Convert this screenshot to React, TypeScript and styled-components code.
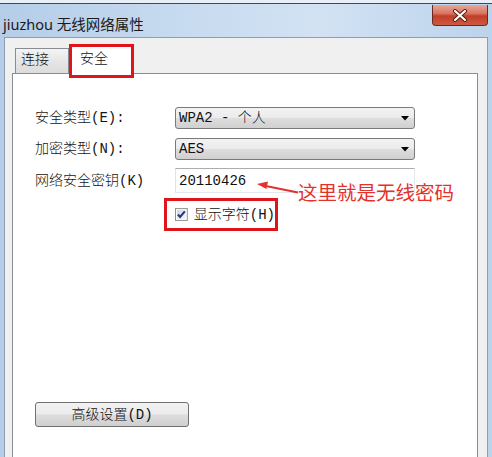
import React from 'react';
import styled, { createGlobalStyle } from 'styled-components';

const Global = createGlobalStyle`
  html, body { margin: 0; padding: 0; background: #e9eff6; }
  #root { width: 492px; height: 457px; }
`;

const UI = `"Noto Sans", "Noto Sans CJK SC", sans-serif`;
const SONG = `"Liberation Mono", "Noto Sans CJK SC", monospace`;

const Page = styled.div`
  width: 492px;
  height: 457px;
  overflow: hidden;
  box-sizing: border-box;
  padding-top: 3px;
  background: #e9eff6;
`;

const Window = styled.div`
  height: 454px;
  display: flex;
  flex-direction: column;
  border-top: 1px solid #3d4957;
  background: linear-gradient(90deg, #b5cde8 0%, #c6daef 35%, #d2e2f3 65%, #bcd3ec 100%);
`;

const TitleBar = styled.div`
  height: 33px;
  flex: none;
  display: flex;
  justify-content: space-between;
  align-items: flex-start;
  padding-left: 3px;
`;

const Title = styled.div`
  margin-top: 10px;
  font: 14.5px/20px ${UI};
  color: #1a1a1a;
`;

const CloseButton = styled.div`
  width: 56px;
  height: 21px;
  box-sizing: border-box;
  margin-top: 1px;
  margin-right: 4px;
  border: 1px solid #6b2a20;
  border-top: none;
  border-radius: 0 0 4px 4px;
  background: linear-gradient(180deg, #e8a898 0%, #d97561 42%, #c23e28 55%, #cc5a42 100%);
  display: flex;
  align-items: center;
  justify-content: center;
`;

const Client = styled.div`
  flex: 1;
  margin: 0 4px;
  border: 1px solid #8e9db0;
  border-bottom: none;
  background: #f0f0f0;
  padding: 6px 9px 0 7px;
  display: flex;
  flex-direction: column;
  min-height: 0;
`;

const TabStrip = styled.div`
  height: 29px;
  flex: none;
  display: flex;
  align-items: flex-end;
  padding-left: 3px;
  position: relative;
  z-index: 1;
`;

const Tab = styled.div<{ $active?: boolean }>`
  box-sizing: border-box;
  font-size: 14px;
  font-family: ${SONG};
  font-weight: 300;
  color: #111;
  ${(p) =>
    p.$active
      ? `
    width: 65px;
    height: 34px;
    margin-bottom: -5px;
    border: 3px solid #e0141b;
    background: #fff;
    padding: 5px 0 0 8px;
    line-height: 14px;
  `
      : `
    width: 54px;
    height: 25px;
    border: 1px solid #898c95;
    border-bottom: none;
    background: linear-gradient(180deg, #f4f4f4 0%, #e6e6e6 50%, #dcdcdc 100%);
    padding-left: 5px;
    line-height: 23px;
  `}
`;

const Panel = styled.div`
  flex: 1;
  position: relative;
  background: #fff;
  border: 1px solid #898c95;
  border-bottom: none;
  padding: 33px 0 0 22px;
  display: flex;
  flex-direction: column;
  align-items: flex-start;
`;

const Row = styled.div<{ $h: number; $mb: number }>`
  display: grid;
  grid-template-columns: 140px 240px;
  align-items: center;
  height: ${(p) => p.$h}px;
  margin-bottom: ${(p) => p.$mb}px;
`;

const Label = styled.div`
  font: 300 14px/16px ${SONG};
  color: #141414;
  white-space: nowrap;
`;

const Select = styled.div`
  height: 22px;
  box-sizing: border-box;
  border: 1px solid #7a7a7a;
  border-radius: 3px;
  background: linear-gradient(180deg, #f3f3f3 0%, #ebebeb 48%, #dddddd 52%, #d0d0d0 100%);
  display: flex;
  align-items: center;
  justify-content: space-between;
  padding: 0 5px 0 3px;
  font: 300 14px/16px ${SONG};
  color: #111;
`;

const TextBox = styled.div`
  height: 25px;
  box-sizing: border-box;
  border: 1px solid;
  border-color: #abadb3 #e3e9ef #e3e9ef #e2e3ea;
  background: #fff;
  display: flex;
  align-items: center;
  padding-left: 3px;
  font: 300 14px/16px ${SONG};
  color: #111;
`;

const HighlightBox = styled.div`
  width: 114px;
  height: 33px;
  box-sizing: border-box;
  margin-left: -11px;
  border: 3px solid #e0141b;
  display: flex;
  align-items: center;
  gap: 6px;
  padding-left: 8px;
  font: 300 14px/16px ${SONG};
  color: #111;
  white-space: nowrap;
`;

const Button = styled.div`
  margin-top: 171px;
  width: 154px;
  height: 25px;
  box-sizing: border-box;
  border: 1px solid #707070;
  border-radius: 3px;
  background: linear-gradient(180deg, #f2f2f2 0%, #ebebeb 48%, #dddddd 52%, #cfcfcf 100%);
  display: flex;
  align-items: center;
  justify-content: center;
  font: 300 14px/16px ${SONG};
  color: #111;
`;

const Arrow = styled.svg`
  position: absolute;
  left: 242px;
  top: 104px;
`;

const Note = styled.div`
  position: absolute;
  left: 285px;
  top: 109px;
  font: 19.5px/20px ${UI};
  color: #e5312b;
  white-space: nowrap;
`;

const Caret = () => (
  <svg width="8" height="5" viewBox="0 0 8 5">
    <path d="M0 0H8L4 4.5Z" fill="#000" />
  </svg>
);

const CheckIcon = () => (
  <svg width="13" height="13" viewBox="0 0 13 13">
    <defs>
      <linearGradient id="cbg" x1="0" y1="0" x2="1" y2="1">
        <stop offset="0" stopColor="#cfd6df" />
        <stop offset="1" stopColor="#f6f8fa" />
      </linearGradient>
    </defs>
    <rect x="0.5" y="0.5" width="12" height="12" fill="#fff" stroke="#8f8f8f" />
    <rect x="2" y="2" width="9" height="9" fill="url(#cbg)" />
    <path d="M3 6.5 L5.2 9 L10 3.2" fill="none" stroke="#1c3780" strokeWidth="2" />
  </svg>
);

const CloseX = () => (
  <svg width="18" height="13" viewBox="0 0 18 13">
    <path d="M4 2 L14 11 M14 2 L4 11" stroke="#5a1a10" strokeWidth="4" strokeLinecap="round" />
    <path d="M4 2 L14 11 M14 2 L4 11" stroke="#ffffff" strokeWidth="2.2" strokeLinecap="round" />
  </svg>
);

export default function App() {
  return (
    <>
      <Global />
      <Page>
        <Window>
          <TitleBar>
            <Title>jiuzhou 无线网络属性</Title>
            <CloseButton>
              <CloseX />
            </CloseButton>
          </TitleBar>
          <Client>
            <TabStrip>
              <Tab>连接</Tab>
              <Tab $active>安全</Tab>
            </TabStrip>
            <Panel>
              <Row $h={22} $mb={9}>
                <Label>安全类型(E):</Label>
                <Select>
                  <span>WPA2 - 个人</span>
                  <Caret />
                </Select>
              </Row>
              <Row $h={22} $mb={8}>
                <Label>加密类型(N):</Label>
                <Select>
                  <span>AES</span>
                  <Caret />
                </Select>
              </Row>
              <Row $h={25} $mb={5}>
                <Label>网络安全密钥(K)</Label>
                <TextBox>20110426</TextBox>
              </Row>
              <Row $h={33} $mb={0}>
                <span />
                <HighlightBox>
                  <CheckIcon />
                  <span>显示字符(H)</span>
                </HighlightBox>
              </Row>
              <Button>高级设置(D)</Button>
              <Arrow width="45" height="18" viewBox="0 0 45 18">
                <path d="M12 8.2 L43 14.5" stroke="#e5312b" strokeWidth="2" />
                <path d="M2 6 L13 3.5 L11.5 11 Z" fill="#e5312b" />
              </Arrow>
              <Note>这里就是无线密码</Note>
            </Panel>
          </Client>
        </Window>
      </Page>
    </>
  );
}
